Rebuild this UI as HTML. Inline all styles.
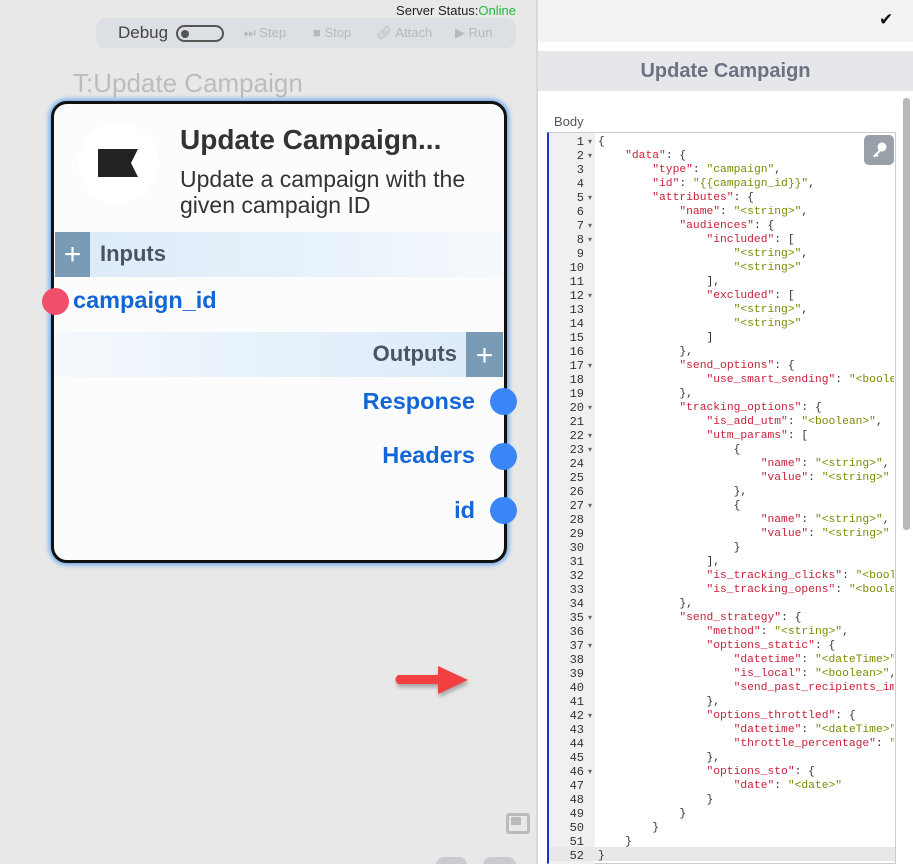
<!DOCTYPE html>
<html><head><meta charset="utf-8"><style>
*{margin:0;padding:0;box-sizing:border-box}
html,body{width:913px;height:864px;overflow:hidden}
body{background:#e8e8e8;font-family:"Liberation Sans",sans-serif;position:relative}
.abs{position:absolute}
.code{font-family:"Liberation Mono",monospace;font-size:11.3px;line-height:14px;white-space:pre;color:#333}
.k{color:#c8203a}.s{color:#7c8a00}
.num{font-family:"Liberation Mono",monospace;font-size:12px;line-height:14px;color:#333;white-space:pre}
.ar{position:absolute;left:588px;font-size:8px;line-height:14px;color:#666}
</style></head><body>
<!-- left canvas -->
<div class="abs" style="right:397px;top:3px;font-size:13px;color:#222">Server Status:<span style="color:#22b83a">Online</span></div>
<div class="abs" style="left:96px;top:18px;width:420px;height:30px;background:#dcdfe3;border-radius:10px"></div>
<div class="abs" style="left:118px;top:23px;font-size:17px;color:#444">Debug</div>
<div class="abs" style="left:176px;top:25px;width:48px;height:17px;border:2px solid #555;border-radius:9px"></div>
<div class="abs" style="left:181px;top:30px;width:8px;height:8px;background:#555;border-radius:50%"></div>
<div class="abs" style="left:244px;top:25px;font-size:13px;color:#b5b8bd">⏭ Step</div>
<div class="abs" style="left:313px;top:25px;font-size:13px;color:#b5b8bd">■ Stop</div>
<div class="abs" style="left:376px;top:25px;font-size:13px;color:#b5b8bd">🔗︎ Attach</div>
<div class="abs" style="left:455px;top:25px;font-size:13px;color:#b5b8bd">▶ Run</div>
<div class="abs" style="left:73px;top:68px;font-size:26px;color:#bcbcbc">T:Update Campaign</div>

<div class="abs" style="left:51px;top:101px;width:456px;height:462px;background:#fcfcfc;border:3px solid #111;border-radius:16px;box-shadow:0 0 5px 2px #6aa8ec"></div>
<div class="abs" style="left:78px;top:123px;width:81px;height:81px;background:#fff;border-radius:50%"></div>
<svg class="abs" style="left:98px;top:149px" width="42" height="29"><path d="M0 0H40L33 14L40 28H0Z" fill="#222"/></svg>
<div class="abs" style="left:180px;top:124px;font-size:28px;font-weight:bold;color:#333">Update Campaign...</div>
<div class="abs" style="left:180px;top:166px;font-size:23px;line-height:26px;color:#333">Update a campaign with the<br>given campaign ID</div>

<div class="abs" style="left:55px;top:232px;width:448px;height:45px;background:linear-gradient(90deg,#dceaf8,#e8f2fb 60%,#f6f9fc)"></div>
<div class="abs" style="left:55px;top:232px;width:35px;height:45px;background:#7a9bb5;color:#fff;font-size:30px;text-align:center;line-height:45px">+</div>
<div class="abs" style="left:100px;top:241px;font-size:22px;font-weight:bold;color:#4a5563">Inputs</div>
<div class="abs" style="left:42px;top:288px;width:27px;height:27px;background:#f0506a;border-radius:50%"></div>
<div class="abs" style="left:73px;top:287px;font-size:23.5px;font-weight:bold;color:#1366d6">campaign_id</div>

<div class="abs" style="left:55px;top:332px;width:448px;height:45px;background:linear-gradient(90deg,#f6f9fc,#e8f2fb 40%,#dceaf8)"></div>
<div class="abs" style="left:466px;top:332px;width:37px;height:45px;background:#7a9bb5;color:#fff;font-size:30px;text-align:center;line-height:47px">+</div>
<div class="abs" style="right:456px;top:341px;font-size:22px;font-weight:bold;color:#4a5563">Outputs</div>
<div class="abs" style="right:438px;top:388px;font-size:23.5px;font-weight:bold;color:#1366d6">Response</div>
<div class="abs" style="right:438px;top:442px;font-size:23.5px;font-weight:bold;color:#1366d6">Headers</div>
<div class="abs" style="right:438px;top:497px;font-size:23.5px;font-weight:bold;color:#1366d6">id</div>
<div class="abs" style="left:490px;top:388px;width:27px;height:27px;background:#3b86f6;border-radius:50%"></div>
<div class="abs" style="left:490px;top:443px;width:27px;height:27px;background:#3b86f6;border-radius:50%"></div>
<div class="abs" style="left:490px;top:497px;width:27px;height:27px;background:#3b86f6;border-radius:50%"></div>

<svg class="abs" style="left:390px;top:664px;filter:drop-shadow(1px 3px 2px rgba(0,0,0,.3))" width="82" height="34"><path d="M8 11H48V2L78 16L48 30V20H8Q3 15.5 8 11Z" fill="#f04040"/></svg>
<div class="abs" style="left:506px;top:813px;width:24px;height:21px;border:3px solid #bbb;border-radius:3px"></div>
<div class="abs" style="left:511px;top:817px;width:10px;height:8px;background:#bbb"></div>
<div class="abs" style="left:436px;top:857px;width:31px;height:20px;background:#c9cbd0;border-radius:8px"></div>
<div class="abs" style="left:483px;top:857px;width:33px;height:20px;background:#c9cbd0;border-radius:8px"></div>

<!-- right panel -->
<div class="abs" style="left:536px;top:0;width:377px;height:864px;background:#fff;border-left:2px solid #d8d8d8"></div>
<div class="abs" style="left:538px;top:0;width:375px;height:42px;background:#f2f3f5"></div>
<div class="abs" style="left:879px;top:10px;font-size:17px;color:#111">✔</div>
<div class="abs" style="left:538px;top:51px;width:375px;height:40px;background:#e5e7eb;text-align:center;font-size:20px;font-weight:bold;color:#6b7280;line-height:40px">Update Campaign</div>
<div class="abs" style="left:903px;top:98px;width:7px;height:432px;background:#b8b8b8;border-radius:3px"></div>
<div class="abs" style="left:554px;top:114px;font-size:13px;color:#555">Body</div>
<div class="abs" style="left:547px;top:132px;width:349px;height:732px;border:1px solid #ccc;border-left:2px solid #2030d0;background:#fff"></div>
<div class="abs" style="left:549px;top:133px;width:46px;height:731px;background:#f0f0f0"></div>
<div class="abs" style="left:549px;top:847px;width:346px;height:14px;background:#e8e8e8"></div>
<div class="abs" style="left:864px;top:135px;width:30px;height:30px;background:#9aa0aa;border-radius:5px"></div>
<svg class="abs" style="left:869px;top:140px" width="20" height="20"><circle cx="13" cy="7" r="4.5" fill="#fff"/><path d="M11 9L4 16L5.5 17.5L7 16L8 17L9.5 15.5L8.5 14.5L13 10Z" fill="#fff"/></svg>
<div class="abs num" style="left:549px;top:135px;width:35px;text-align:right">1
2
3
4
5
6
7
8
9
10
11
12
13
14
15
16
17
18
19
20
21
22
23
24
25
26
27
28
29
30
31
32
33
34
35
36
37
38
39
40
41
42
43
44
45
46
47
48
49
50
51
52</div>
<div class="ar" style="top:135px">▾</div>
<div class="ar" style="top:149px">▾</div>
<div class="ar" style="top:191px">▾</div>
<div class="ar" style="top:219px">▾</div>
<div class="ar" style="top:233px">▾</div>
<div class="ar" style="top:289px">▾</div>
<div class="ar" style="top:359px">▾</div>
<div class="ar" style="top:401px">▾</div>
<div class="ar" style="top:429px">▾</div>
<div class="ar" style="top:443px">▾</div>
<div class="ar" style="top:499px">▾</div>
<div class="ar" style="top:611px">▾</div>
<div class="ar" style="top:639px">▾</div>
<div class="ar" style="top:709px">▾</div>
<div class="ar" style="top:765px">▾</div>
<div class="abs code" style="left:598px;top:135px;width:296px;overflow:hidden">{
    <span class="k">"data"</span>: {
        <span class="k">"type"</span>: <span class="s">"campaign"</span>,
        <span class="k">"id"</span>: <span class="s">"{{campaign_id}}"</span>,
        <span class="k">"attributes"</span>: {
            <span class="k">"name"</span>: <span class="s">"&lt;string&gt;"</span>,
            <span class="k">"audiences"</span>: {
                <span class="k">"included"</span>: [
                    <span class="s">"&lt;string&gt;"</span>,
                    <span class="s">"&lt;string&gt;"</span>
                ],
                <span class="k">"excluded"</span>: [
                    <span class="s">"&lt;string&gt;"</span>,
                    <span class="s">"&lt;string&gt;"</span>
                ]
            },
            <span class="k">"send_options"</span>: {
                <span class="k">"use_smart_sending"</span>: <span class="s">"&lt;boolean&gt;"</span>
            },
            <span class="k">"tracking_options"</span>: {
                <span class="k">"is_add_utm"</span>: <span class="s">"&lt;boolean&gt;"</span>,
                <span class="k">"utm_params"</span>: [
                    {
                        <span class="k">"name"</span>: <span class="s">"&lt;string&gt;"</span>,
                        <span class="k">"value"</span>: <span class="s">"&lt;string&gt;"</span>
                    },
                    {
                        <span class="k">"name"</span>: <span class="s">"&lt;string&gt;"</span>,
                        <span class="k">"value"</span>: <span class="s">"&lt;string&gt;"</span>
                    }
                ],
                <span class="k">"is_tracking_clicks"</span>: <span class="s">"&lt;boolean&gt;"</span>,
                <span class="k">"is_tracking_opens"</span>: <span class="s">"&lt;boolean&gt;"</span>
            },
            <span class="k">"send_strategy"</span>: {
                <span class="k">"method"</span>: <span class="s">"&lt;string&gt;"</span>,
                <span class="k">"options_static"</span>: {
                    <span class="k">"datetime"</span>: <span class="s">"&lt;dateTime&gt;"</span>,
                    <span class="k">"is_local"</span>: <span class="s">"&lt;boolean&gt;"</span>,
                    <span class="k">"send_past_recipients_immediately"</span>: <span class="s">"&lt;boolean&gt;"</span>
                },
                <span class="k">"options_throttled"</span>: {
                    <span class="k">"datetime"</span>: <span class="s">"&lt;dateTime&gt;"</span>,
                    <span class="k">"throttle_percentage"</span>: <span class="s">"&lt;integer&gt;"</span>
                },
                <span class="k">"options_sto"</span>: {
                    <span class="k">"date"</span>: <span class="s">"&lt;date&gt;"</span>
                }
            }
        }
    }
}</div>
</body></html>
